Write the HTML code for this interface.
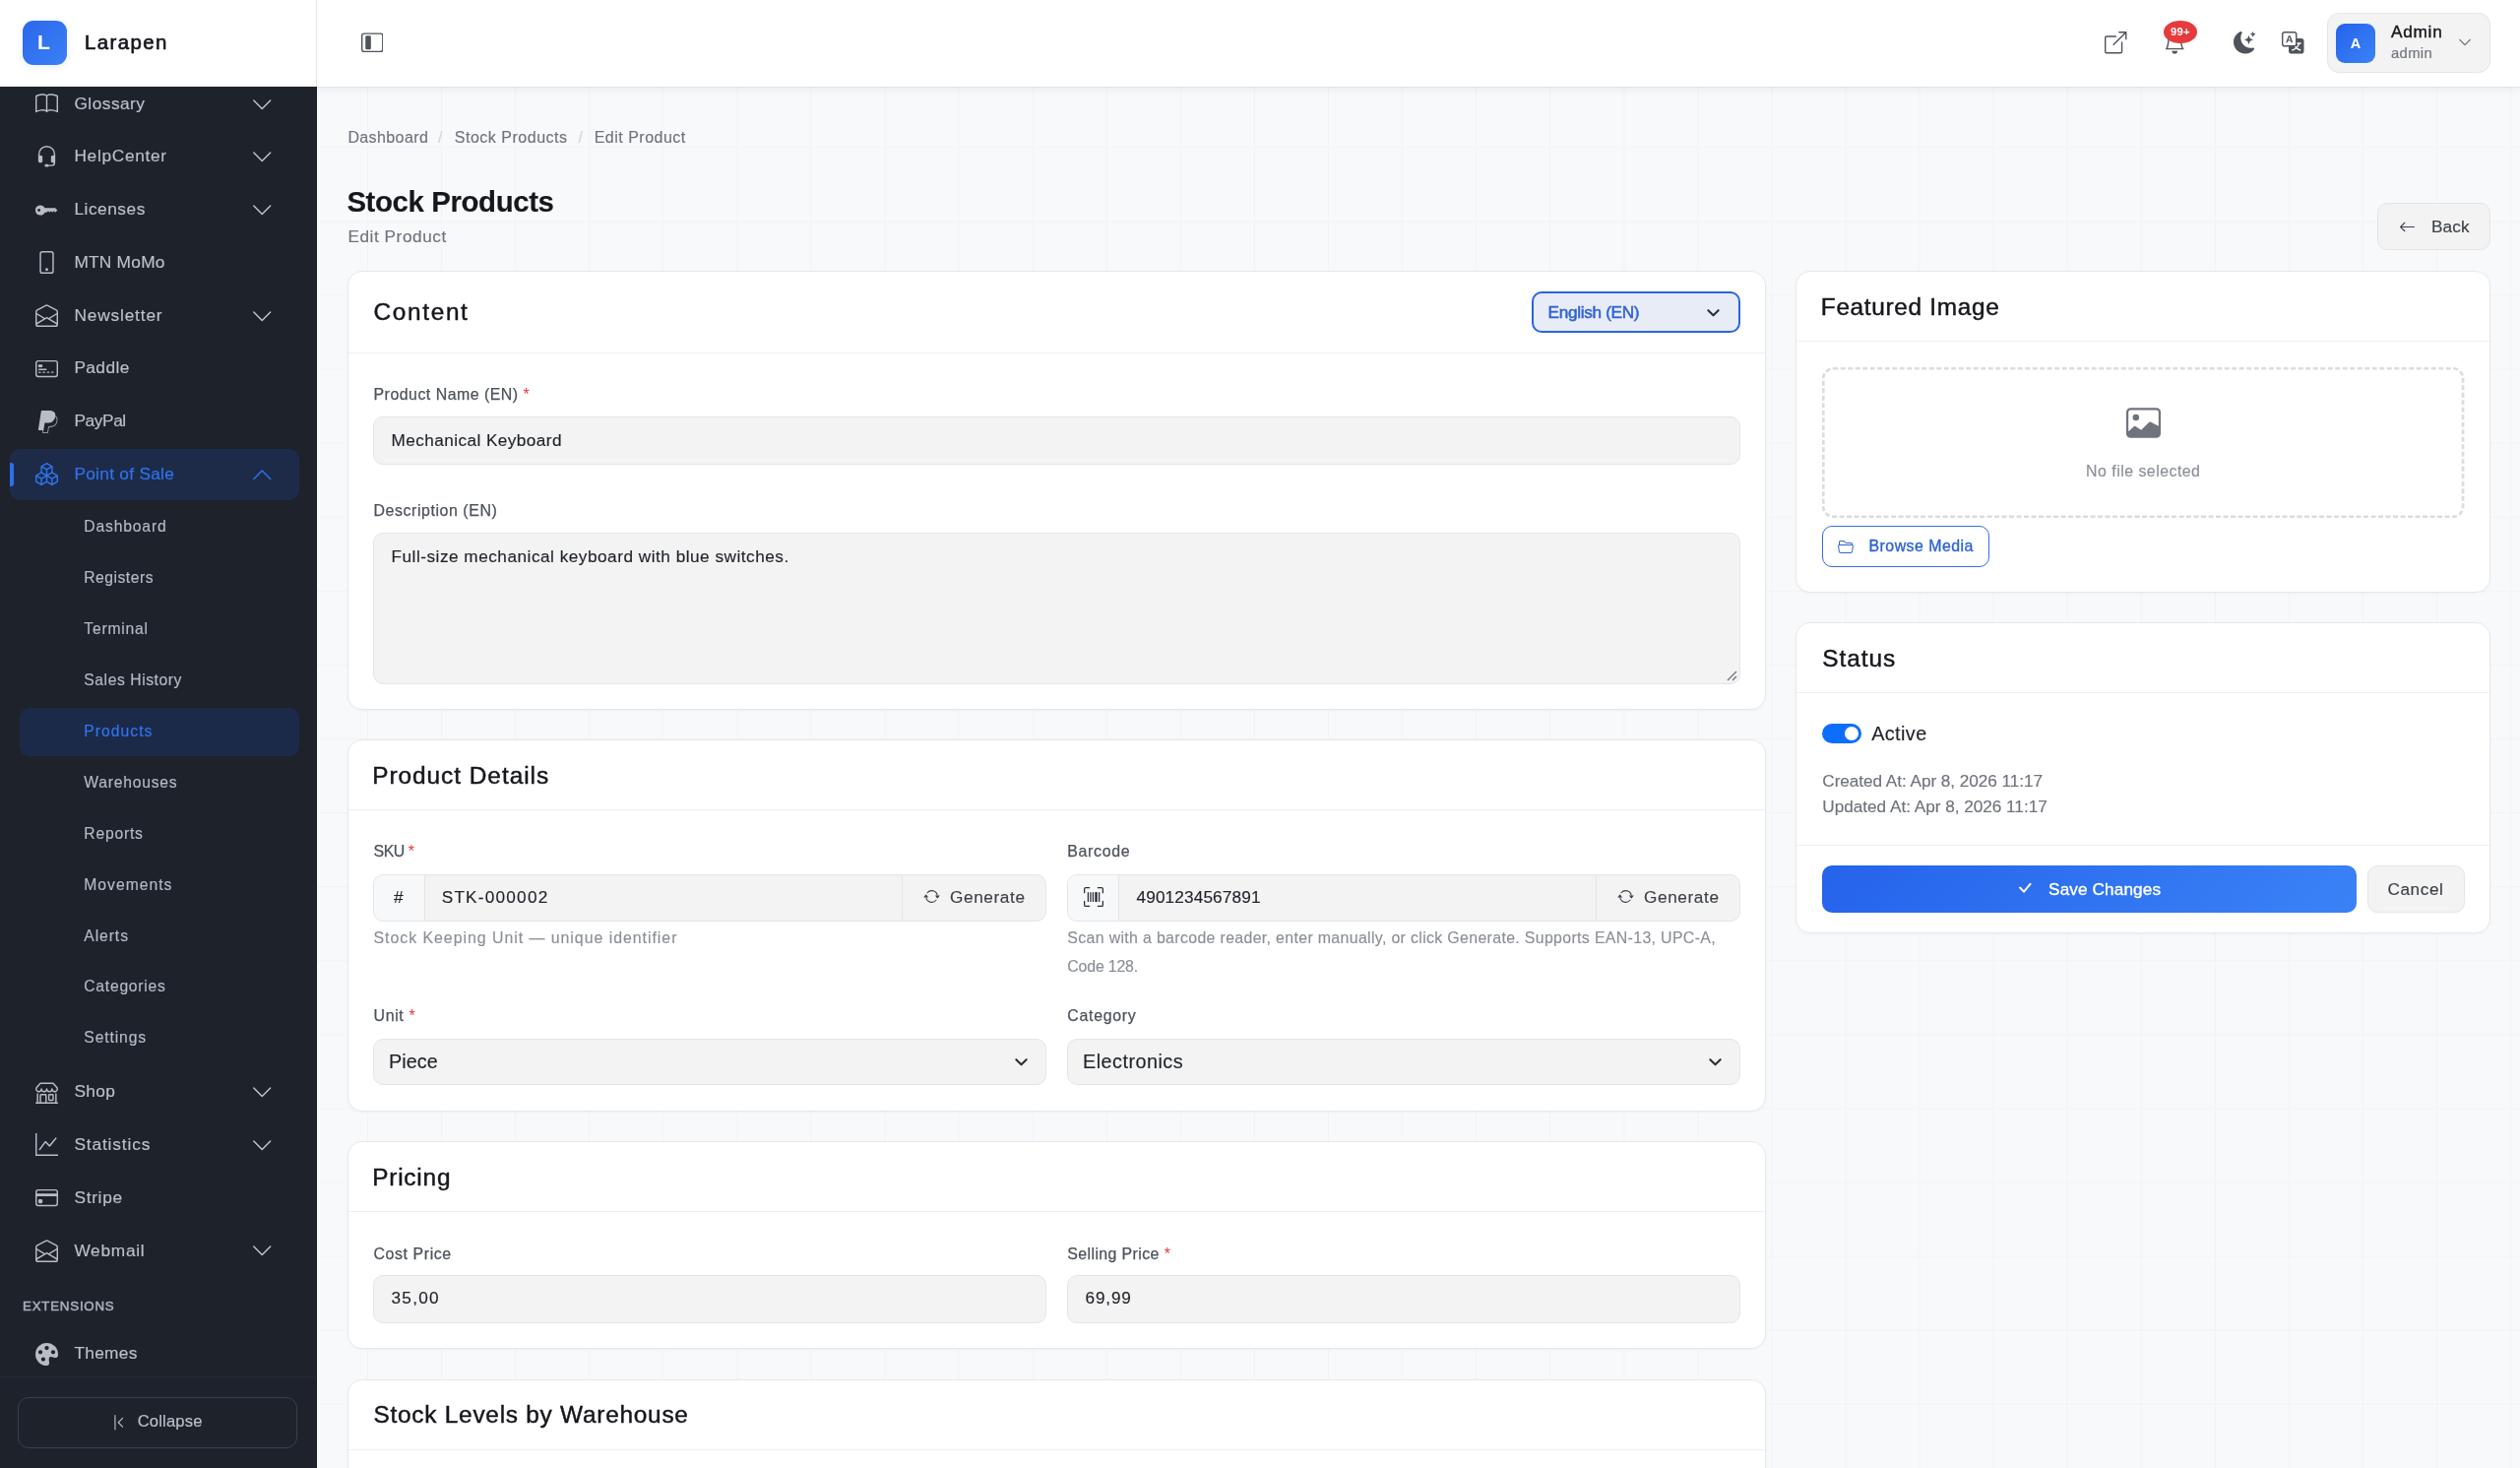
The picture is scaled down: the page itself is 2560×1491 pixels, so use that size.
<!DOCTYPE html>
<html lang="en">
<head>
<meta charset="utf-8">
<title>Edit Product - Stock Products - Larapen</title>
<style>
*{box-sizing:border-box;margin:0;padding:0}
html,body{width:2560px;height:1491px;overflow:hidden}
body{position:relative;font-family:"Liberation Sans",sans-serif;color:#15171c;background-color:#f8f9fb;
background-image:linear-gradient(to right,#f2f3f6 1.3px,transparent 1.3px),linear-gradient(to bottom,#f2f3f6 1.3px,transparent 1.3px);
background-size:75.08px 75.08px;background-position:-2.4px -0.8px}
.abs{position:absolute}
.t{position:absolute;white-space:nowrap;line-height:1;-webkit-text-stroke:.15px}
main,#sidebar,#topbar{will-change:transform}
svg{display:block}
/* ---------- sidebar ---------- */
#sidebar{z-index:3;position:absolute;left:0;top:0;width:321.5px;height:1491px;background:#1e222b;border-right:1px solid #1a1d26}
#brand{position:absolute;left:0;top:0;width:322px;height:88px;background:#fff;border-right:1px solid #e6e7ea}
#logo{position:absolute;left:22.5px;top:20.6px;width:45px;height:45px;border-radius:11px;background:linear-gradient(135deg,#2b67ec,#3b80f5);box-shadow:0 2px 9px rgba(37,99,235,.10)}
#logo span{position:absolute;left:0;top:-0.5px;width:44px;line-height:45px;text-align:center;color:#fff;font-weight:700;font-size:21px}
.nav{position:absolute;left:10px;width:294px;height:51.5px;border-radius:10px;color:#bcc0c9;font-size:17.3px}
.nav .ic{position:absolute;left:26px;top:14px;width:23px;height:23px;fill:#b9bcc3}
.nav .t{left:65.4px;top:16.65px}
.nav .ch{position:absolute;left:245px;top:14.5px;width:22.5px;height:22.5px;fill:#c3c6cc}
.nav.on{background:#1e2b48;color:#2f74f0}
.nav.on .ic,.nav.on .ch{fill:#2f74f0}
.nav.on i{position:absolute;left:0;top:14px;width:4px;height:24px;border-radius:0 3px 3px 0;background:#2f6fed}
.sub{position:absolute;left:20px;width:284px;height:49px;border-radius:10px;color:#b6bac4;font-size:15.7px}
.sub .t{left:65.3px;top:16.2px}
.sub.on{background:#1c2a49;color:#2f74f0}
#ext{left:23px;top:1320.4px;font-size:13.3px;font-weight:400;-webkit-text-stroke:.5px #adb1bb;color:#adb1bb}
#sbline{position:absolute;left:0;top:1398px;width:321px;height:1px;background:#242832}
#collapse{position:absolute;left:18px;top:1419px;width:284px;height:52px;border:1px solid #3a3f4a;border-radius:11px;color:#bcc0c9;font-size:16.6px}
#collapse svg{position:absolute;left:93px;top:15.5px;width:17.5px;height:17.5px;fill:#c3c6cc}
#collapse .t{left:120.7px;top:16.45px}
/* ---------- topbar ---------- */
#topbar{position:absolute;left:322px;top:0;width:2238px;height:88px;background:#fff;box-shadow:0 2px 10px rgba(20,24,36,.07),0 1px 0 rgba(20,24,36,.05)}
.hi{position:absolute;top:32px;width:22.5px;height:22.5px;fill:#50535c}
#badge{position:absolute;left:1876px;top:21px;width:34px;height:22.5px;border-radius:50%;background:#e53b3c;color:#fff;font-weight:700;font-size:11.2px;letter-spacing:.3px;text-align:center;line-height:23px}
#user{position:absolute;left:2042px;top:13px;width:166px;height:61px;border-radius:12px;background:#f3f3f4;border:1px solid #e6e6e9}
#avatar{position:absolute;left:8px;top:10px;width:40px;height:40px;border-radius:9px;background:linear-gradient(135deg,#2563eb,#3b82f6);color:#fff;font-weight:700;font-size:14.5px;text-align:center;line-height:40px}
/* ---------- content ---------- */
.crumb{font-size:16px;color:#6f737c;top:131px}
.sep{font-size:16px;color:#d3d5da;top:131px}
.card{position:absolute;background:#fff;border:1px solid #e7e8eb;border-radius:15px;box-shadow:0 1px 3px rgba(20,24,36,.04)}
.card .hd{position:absolute;left:0;right:0;top:0;border-bottom:1px solid #eeeff1}
.ct{font-size:24.4px;color:#15171c;font-weight:400;-webkit-text-stroke:.45px #15171c}
.lbl{font-size:15.9px;color:#4d525b;-webkit-text-stroke:.25px #4d525b}
.req{color:#e5383b;-webkit-text-stroke:0}
.inp{position:absolute;background:#f3f3f4;border:1px solid #e5e5e8;border-radius:10px;font-size:17.2px;color:#1f2329}
.help{font-size:15.9px;color:#8b8f97}
.btn{position:absolute;border-radius:10px;font-size:17.2px}
.btn.gray{background:#f3f3f4;border:1px solid #e5e5e8;color:#3c4049}
.ig{position:absolute;height:48px;background:#f3f3f4;border:1px solid #e5e5e8;border-radius:10px;overflow:hidden;font-size:17.2px;color:#1f2329}
.ig .pre{position:absolute;left:0;top:0;width:52px;height:46px;background:#f7f8fa;border-right:1px solid #e5e5e8}
.ig .gen{position:absolute;right:0;top:0;width:146px;height:46px;border-left:1px solid #e5e5e8;color:#3c4049}
.ig .gen svg{position:absolute;left:20.6px;top:13.2px;width:17px;height:17px;fill:#3c4049}
.ig .gen .t{left:48px;top:14px}
.sel{position:absolute;height:47px;background:#f3f3f4;border:1px solid #e5e5e8;border-radius:10px;font-size:19.8px;color:#1f2329}
.sel svg{position:absolute;right:17px;top:15px;width:15px;height:15px;fill:none;stroke:#2b2f36;stroke-width:2.2;stroke-linecap:round;stroke-linejoin:round}
</style>
</head>
<body>
<aside id="sidebar">
<nav>
<a class="nav" style="top:80.00px"><svg class="ic" viewBox="0 0 16 16"><path d="M1 2.828c.885-.37 2.154-.769 3.388-.893 1.33-.134 2.458.063 3.112.752v9.746c-.935-.53-2.12-.603-3.213-.493-1.18.12-2.37.461-3.287.811V2.828zm7.5-.141c.654-.689 1.782-.886 3.112-.752 1.234.124 2.503.523 3.388.893v9.923c-.918-.35-2.107-.692-3.287-.81-1.094-.111-2.278-.039-3.213.492V2.687zM8 1.783C7.015.936 5.587.81 4.287.94c-1.514.153-3.042.672-3.994 1.105A.5.5 0 0 0 0 2.5v11a.5.5 0 0 0 .707.455c.882-.4 2.303-.881 3.68-1.02 1.409-.142 2.59.087 3.223.877a.5.5 0 0 0 .78 0c.633-.79 1.814-1.019 3.222-.877 1.378.139 2.8.62 3.681 1.02A.5.5 0 0 0 16 13.5v-11a.5.5 0 0 0-.293-.455c-.952-.433-2.48-.952-3.994-1.105C10.413.809 8.985.936 8 1.783z"/></svg><span class="t" id="n1" style="letter-spacing:0.49px">Glossary</span><svg class="ch" viewBox="0 0 16 16"><path fill-rule="evenodd" d="M1.646 4.646a.5.5 0 0 1 .708 0L8 10.293l5.646-5.647a.5.5 0 0 1 .708.708l-6 6a.5.5 0 0 1-.708 0l-6-6a.5.5 0 0 1 0-.708z"/></svg></a>
<a class="nav" style="top:133.75px"><svg class="ic" viewBox="0 0 16 16"><path d="M8 1a5 5 0 0 0-5 5v1h1a1 1 0 0 1 1 1v3a1 1 0 0 1-1 1H3a1 1 0 0 1-1-1V6a6 6 0 1 1 12 0v6a2.5 2.5 0 0 1-2.5 2.5H9.366a1 1 0 0 1-.866.5h-1a1 1 0 1 1 0-2h1a1 1 0 0 1 .866.5H11.5A1.5 1.5 0 0 0 13 12h-1a1 1 0 0 1-1-1V8a1 1 0 0 1 1-1h1V6a5 5 0 0 0-5-5z"/></svg><span class="t" id="n2" style="letter-spacing:0.7px">HelpCenter</span><svg class="ch" viewBox="0 0 16 16"><path fill-rule="evenodd" d="M1.646 4.646a.5.5 0 0 1 .708 0L8 10.293l5.646-5.647a.5.5 0 0 1 .708.708l-6 6a.5.5 0 0 1-.708 0l-6-6a.5.5 0 0 1 0-.708z"/></svg></a>
<a class="nav" style="top:187.50px"><svg class="ic" viewBox="0 0 16 16"><path d="M3.5 11.5a3.5 3.5 0 1 1 3.163-5H14L15.5 8 14 9.5l-1-1-1 1-1-1-1 1-1-1-1 1H6.663a3.5 3.5 0 0 1-3.163 2zM2.5 9a1 1 0 1 0 0-2 1 1 0 0 0 0 2z"/></svg><span class="t" id="n3" style="letter-spacing:0.53px">Licenses</span><svg class="ch" viewBox="0 0 16 16"><path fill-rule="evenodd" d="M1.646 4.646a.5.5 0 0 1 .708 0L8 10.293l5.646-5.647a.5.5 0 0 1 .708.708l-6 6a.5.5 0 0 1-.708 0l-6-6a.5.5 0 0 1 0-.708z"/></svg></a>
<a class="nav" style="top:241.25px"><svg class="ic" viewBox="0 0 16 16"><path d="M11 1a1 1 0 0 1 1 1v12a1 1 0 0 1-1 1H5a1 1 0 0 1-1-1V2a1 1 0 0 1 1-1h6zM5 0a2 2 0 0 0-2 2v12a2 2 0 0 0 2 2h6a2 2 0 0 0 2-2V2a2 2 0 0 0-2-2H5z"/><path d="M8 14a1 1 0 1 0 0-2 1 1 0 0 0 0 2z"/></svg><span class="t" id="n4" style="letter-spacing:0.25px">MTN MoMo</span></a>
<a class="nav" style="top:295.00px"><svg class="ic" viewBox="0 0 16 16"><path d="M8.47 1.318a1 1 0 0 0-.94 0l-6 3.2A1 1 0 0 0 1 5.4v.817l5.75 3.45L8 8.917l1.25.75L15 6.217V5.4a1 1 0 0 0-.53-.882l-6-3.2ZM15 7.383l-4.778 2.867L15 13.117V7.383Zm-.035 6.88L8 10.082l-6.965 4.18A1 1 0 0 0 2 15h12a1 1 0 0 0 .965-.738ZM1 13.116l4.778-2.867L1 7.383v5.734ZM7.059.435a2 2 0 0 1 1.882 0l6 3.2A2 2 0 0 1 16 5.4V14a2 2 0 0 1-2 2H2a2 2 0 0 1-2-2V5.4a2 2 0 0 1 1.059-1.765l6-3.2Z"/></svg><span class="t" id="n5" style="letter-spacing:0.84px">Newsletter</span><svg class="ch" viewBox="0 0 16 16"><path fill-rule="evenodd" d="M1.646 4.646a.5.5 0 0 1 .708 0L8 10.293l5.646-5.647a.5.5 0 0 1 .708.708l-6 6a.5.5 0 0 1-.708 0l-6-6a.5.5 0 0 1 0-.708z"/></svg></a>
<a class="nav" style="top:348.75px"><svg class="ic" viewBox="0 0 16 16"><path d="M14 3a1 1 0 0 1 1 1v8a1 1 0 0 1-1 1H2a1 1 0 0 1-1-1V4a1 1 0 0 1 1-1h12zM2 2a2 2 0 0 0-2 2v8a2 2 0 0 0 2 2h12a2 2 0 0 0 2-2V4a2 2 0 0 0-2-2H2z"/><path d="M2 5.5a.5.5 0 0 1 .5-.5h2a.5.5 0 0 1 .5.5v1a.5.5 0 0 1-.5.5h-2a.5.5 0 0 1-.5-.5v-1zm0 3a.5.5 0 0 1 .5-.5h5a.5.5 0 0 1 0 1h-5a.5.5 0 0 1-.5-.5zm0 2a.5.5 0 0 1 .5-.5h1a.5.5 0 0 1 0 1h-1a.5.5 0 0 1-.5-.5zm3 0a.5.5 0 0 1 .5-.5h1a.5.5 0 0 1 0 1h-1a.5.5 0 0 1-.5-.5zm3 0a.5.5 0 0 1 .5-.5h1a.5.5 0 0 1 0 1h-1a.5.5 0 0 1-.5-.5zm3 0a.5.5 0 0 1 .5-.5h1a.5.5 0 0 1 0 1h-1a.5.5 0 0 1-.5-.5z"/></svg><span class="t" id="n6" style="letter-spacing:0.42px">Paddle</span></a>
<a class="nav" style="top:402.50px"><svg class="ic" viewBox="0 0 16 16"><path d="M14.06 3.713c.12-1.071-.093-1.832-.702-2.526C12.628.356 11.312 0 9.626 0H4.734a.7.7 0 0 0-.691.59L2.005 13.509a.42.42 0 0 0 .415.486h2.756l-.202 1.28a.628.628 0 0 0 .62.726H8.14c.429 0 .793-.31.862-.731l.025-.13.48-3.043.03-.164.001-.007a.351.351 0 0 1 .348-.297h.38c1.266 0 2.425-.256 3.345-.91.379-.27.712-.603.993-1.005a4.942 4.942 0 0 0 .88-2.195c.242-1.246.13-2.356-.57-3.154a2.687 2.687 0 0 0-.76-.59l-.094-.061ZM6.543 8.82a.695.695 0 0 1 .321-.079H8.3c2.82 0 5.027-1.144 5.672-4.456l.003-.016c.217.124.4.27.548.438.546.623.679 1.535.45 2.71-.272 1.397-.866 2.307-1.663 2.874-.802.57-1.842.815-3.043.815h-.38a.873.873 0 0 0-.863.734l-.03.164-.48 3.043-.024.13-.001.004a.352.352 0 0 1-.348.296H5.595a.106.106 0 0 1-.105-.123l.208-1.32.845-5.214Z"/></svg><span class="t" id="n7" style="letter-spacing:-0.39px">PayPal</span></a>
<a class="nav on" style="top:456.25px"><i></i><svg class="ic" viewBox="0 0 16 16"><path d="M7.752.066a.5.5 0 0 1 .496 0l3.75 2.143a.5.5 0 0 1 .252.434v3.995l3.498 2A.5.5 0 0 1 16 9.07v4.286a.5.5 0 0 1-.252.434l-3.75 2.143a.5.5 0 0 1-.496 0l-3.502-2-3.502 2.001a.5.5 0 0 1-.496 0l-3.75-2.143A.5.5 0 0 1 0 13.357V9.071a.5.5 0 0 1 .252-.434L3.75 6.638V2.643a.5.5 0 0 1 .252-.434L7.752.066ZM4.25 7.504 1.508 9.071l2.742 1.567 2.742-1.567L4.25 7.504ZM7.5 9.933l-2.75 1.571v3.134l2.75-1.571V9.933Zm1 3.134 2.75 1.571v-3.134L8.5 9.933v3.134Zm.508-3.996 2.742 1.567 2.742-1.567-2.742-1.567-2.742 1.567Zm2.242-2.433V3.504L8.5 5.076V8.21l2.75-1.572ZM7.5 8.21V5.076L4.75 3.504v3.134L7.5 8.21ZM5.258 2.643 8 4.21l2.742-1.567L8 1.076 5.258 2.643ZM15 9.933l-2.75 1.571v3.134L15 13.067V9.933ZM3.75 14.638v-3.134L1 9.933v3.134l2.75 1.571Z"/></svg><span class="t" id="n8" style="letter-spacing:0.29px">Point of Sale</span><svg class="ch" viewBox="0 0 16 16"><path fill-rule="evenodd" d="M7.646 4.646a.5.5 0 0 1 .708 0l6 6a.5.5 0 0 1-.708.708L8 5.707l-5.646 5.647a.5.5 0 0 1-.708-.708l6-6z"/></svg></a>
<a class="sub" style="top:510.90px"><span class="t" id="n9" style="letter-spacing:0.83px">Dashboard</span></a>
<a class="sub" style="top:562.83px"><span class="t" id="n10" style="letter-spacing:0.49px">Registers</span></a>
<a class="sub" style="top:614.76px"><span class="t" id="n11" style="letter-spacing:0.77px">Terminal</span></a>
<a class="sub" style="top:666.69px"><span class="t" id="n12" style="letter-spacing:0.56px">Sales History</span></a>
<a class="sub on" style="top:718.62px"><span class="t" id="n13" style="letter-spacing:1.03px">Products</span></a>
<a class="sub" style="top:770.55px"><span class="t" id="n14" style="letter-spacing:0.76px">Warehouses</span></a>
<a class="sub" style="top:822.48px"><span class="t" id="n15" style="letter-spacing:0.78px">Reports</span></a>
<a class="sub" style="top:874.41px"><span class="t" id="n16" style="letter-spacing:1.01px">Movements</span></a>
<a class="sub" style="top:926.34px"><span class="t" id="n17" style="letter-spacing:0.92px">Alerts</span></a>
<a class="sub" style="top:978.27px"><span class="t" id="n18" style="letter-spacing:0.74px">Categories</span></a>
<a class="sub" style="top:1030.20px"><span class="t" id="n19" style="letter-spacing:0.87px">Settings</span></a>
<a class="nav" style="top:1083.70px"><svg class="ic" viewBox="0 0 16 16"><path d="M2.97 1.35A1 1 0 0 1 3.73 1h8.54a1 1 0 0 1 .76.35l2.609 3.044A1.5 1.5 0 0 1 16 5.37v.255a2.375 2.375 0 0 1-4.25 1.458A2.371 2.371 0 0 1 9.875 8 2.37 2.37 0 0 1 8 7.083 2.37 2.37 0 0 1 6.125 8a2.37 2.37 0 0 1-1.875-.917A2.375 2.375 0 0 1 0 5.625V5.37a1.5 1.5 0 0 1 .361-.976l2.61-3.045zm1.78 4.275a1.375 1.375 0 0 0 2.75 0 .5.5 0 0 1 1 0 1.375 1.375 0 0 0 2.75 0 .5.5 0 0 1 1 0 1.375 1.375 0 1 0 2.75 0V5.37a.5.5 0 0 0-.12-.325L12.27 2H3.73L1.12 5.045A.5.5 0 0 0 1 5.37v.255a1.375 1.375 0 0 0 2.75 0 .5.5 0 0 1 1 0zM1.5 8.5A.5.5 0 0 1 2 9v6h1v-5a1 1 0 0 1 1-1h3a1 1 0 0 1 1 1v5h6V9a.5.5 0 0 1 1 0v6h.5a.5.5 0 0 1 0 1H.5a.5.5 0 0 1 0-1H1V9a.5.5 0 0 1 .5-.5zM4 15h3v-5H4v5zm5-5a1 1 0 0 1 1-1h2a1 1 0 0 1 1 1v3a1 1 0 0 1-1 1h-2a1 1 0 0 1-1-1v-3zm3 0h-2v3h2v-3z"/></svg><span class="t" id="n20" style="letter-spacing:0.38px">Shop</span><svg class="ch" viewBox="0 0 16 16"><path fill-rule="evenodd" d="M1.646 4.646a.5.5 0 0 1 .708 0L8 10.293l5.646-5.647a.5.5 0 0 1 .708.708l-6 6a.5.5 0 0 1-.708 0l-6-6a.5.5 0 0 1 0-.708z"/></svg></a>
<a class="nav" style="top:1137.45px"><svg class="ic" viewBox="0 0 16 16"><path fill-rule="evenodd" d="M0 0h1v15h15v1H0V0Zm14.817 3.113a.5.5 0 0 1 .07.704l-4.5 5.5a.5.5 0 0 1-.74.037L7.06 6.767l-3.656 5.027a.5.5 0 0 1-.808-.588l4-5.5a.5.5 0 0 1 .758-.06l2.609 2.61 4.15-5.073a.5.5 0 0 1 .704-.07Z"/></svg><span class="t" id="n21" style="letter-spacing:0.86px">Statistics</span><svg class="ch" viewBox="0 0 16 16"><path fill-rule="evenodd" d="M1.646 4.646a.5.5 0 0 1 .708 0L8 10.293l5.646-5.647a.5.5 0 0 1 .708.708l-6 6a.5.5 0 0 1-.708 0l-6-6a.5.5 0 0 1 0-.708z"/></svg></a>
<a class="nav" style="top:1191.20px"><svg class="ic" viewBox="0 0 16 16"><path d="M0 4a2 2 0 0 1 2-2h12a2 2 0 0 1 2 2v8a2 2 0 0 1-2 2H2a2 2 0 0 1-2-2V4zm2-1a1 1 0 0 0-1 1v1h14V4a1 1 0 0 0-1-1H2zm13 4H1v5a1 1 0 0 0 1 1h12a1 1 0 0 0 1-1V7z"/><path d="M2 10a1 1 0 0 1 1-1h1a1 1 0 0 1 1 1v1a1 1 0 0 1-1 1H3a1 1 0 0 1-1-1v-1z"/></svg><span class="t" id="n22" style="letter-spacing:0.71px">Stripe</span></a>
<a class="nav" style="top:1244.95px"><svg class="ic" viewBox="0 0 16 16"><path d="M8.47 1.318a1 1 0 0 0-.94 0l-6 3.2A1 1 0 0 0 1 5.4v.817l5.75 3.45L8 8.917l1.25.75L15 6.217V5.4a1 1 0 0 0-.53-.882l-6-3.2ZM15 7.383l-4.778 2.867L15 13.117V7.383Zm-.035 6.88L8 10.082l-6.965 4.18A1 1 0 0 0 2 15h12a1 1 0 0 0 .965-.738ZM1 13.116l4.778-2.867L1 7.383v5.734ZM7.059.435a2 2 0 0 1 1.882 0l6 3.2A2 2 0 0 1 16 5.4V14a2 2 0 0 1-2 2H2a2 2 0 0 1-2-2V5.4a2 2 0 0 1 1.059-1.765l6-3.2Z"/></svg><span class="t" id="n23" style="letter-spacing:0.73px">Webmail</span><svg class="ch" viewBox="0 0 16 16"><path fill-rule="evenodd" d="M1.646 4.646a.5.5 0 0 1 .708 0L8 10.293l5.646-5.647a.5.5 0 0 1 .708.708l-6 6a.5.5 0 0 1-.708 0l-6-6a.5.5 0 0 1 0-.708z"/></svg></a>
<span class="t" id="ext" style="letter-spacing:0.78px">EXTENSIONS</span>
<a class="nav" style="top:1349.80px"><svg class="ic" viewBox="0 0 16 16"><path d="M12.433 10.07C14.133 10.585 16 11.15 16 8a8 8 0 1 0-8 8c1.996 0 1.826-1.504 1.649-3.08-.124-1.101-.252-2.237.351-2.92.465-.527 1.42-.237 2.433.07zM8 5a1.5 1.5 0 1 1 0-3 1.5 1.5 0 0 1 0 3zm4.5 3a1.5 1.5 0 1 1 0-3 1.5 1.5 0 0 1 0 3zM5 6.5a1.5 1.5 0 1 1-3 0 1.5 1.5 0 0 1 3 0zm.5 6.5a1.5 1.5 0 1 1 0-3 1.5 1.5 0 0 1 0 3z"/></svg><span class="t" id="n24" style="letter-spacing:0.31px">Themes</span></a>
</nav>
<div id="sbline"></div>
<div id="collapse"><svg viewBox="0 0 16 16"><path fill-rule="evenodd" d="M11.854 3.646a.5.5 0 0 1 0 .708L8.207 8l3.647 3.646a.5.5 0 0 1-.708.708l-4-4a.5.5 0 0 1 0-.708l4-4a.5.5 0 0 1 .708 0zM4.5 1a.5.5 0 0 0-.5.5v13a.5.5 0 0 0 1 0v-13a.5.5 0 0 0-.5-.5z"/></svg><span class="t" id="colt" style="letter-spacing:0.16px">Collapse</span></div>
<div id="brand"><div id="logo"><span>L</span></div><span class="t" id="brandt" style="letter-spacing:1.43px;left:86px;top:33px;font-size:20.4px;font-weight:400;-webkit-text-stroke:.65px #15171c;color:#15171c">Larapen</span></div>
</aside>
<header id="topbar">
<svg class="hi" style="left:44.5px;top:32px" viewBox="0 0 16 16"><path d="M14 2a1 1 0 0 1 1 1v10a1 1 0 0 1-1 1H2a1 1 0 0 1-1-1V3a1 1 0 0 1 1-1h12zM2 1a2 2 0 0 0-2 2v10a2 2 0 0 0 2 2h12a2 2 0 0 0 2-2V3a2 2 0 0 0-2-2H2z"/><path d="M3 4a1 1 0 0 1 1-1h2a1 1 0 0 1 1 1v8a1 1 0 0 1-1 1H4a1 1 0 0 1-1-1V4z"/></svg>
<svg class="hi" style="left:1816px" viewBox="0 0 16 16"><path fill-rule="evenodd" d="M8.636 3.5a.5.5 0 0 0-.5-.5H1.5A1.5 1.5 0 0 0 0 4.5v10A1.5 1.5 0 0 0 1.5 16h10a1.5 1.5 0 0 0 1.5-1.5V7.864a.5.5 0 0 0-1 0V14.5a.5.5 0 0 1-.5.5h-10a.5.5 0 0 1-.5-.5v-10a.5.5 0 0 1 .5-.5h6.636a.5.5 0 0 0 .5-.5z"/><path fill-rule="evenodd" d="M16 .5a.5.5 0 0 0-.5-.5h-5a.5.5 0 0 0 0 1h3.793L6.146 9.146a.5.5 0 1 0 .708.708L15 1.707V5.500a.5.5 0 0 0 1 0v-5z"/></svg>
<svg class="hi" style="left:1875.7px" viewBox="0 0 16 16"><path d="M8 16a2 2 0 0 0 2-2H6a2 2 0 0 0 2 2zM8 1.918l-.797.161A4.002 4.002 0 0 0 4 6c0 .628-.134 2.197-.459 3.742-.16.767-.376 1.566-.663 2.258h10.244c-.287-.692-.502-1.49-.663-2.258C12.134 8.197 12 6.628 12 6a4.002 4.002 0 0 0-3.203-3.920L8 1.917zM14.22 12c.223.447.481.801.78 1H1c.299-.199.557-.553.78-1C2.68 10.2 3 6.88 3 6c0-2.42 1.72-4.44 4.005-4.901a1 1 0 1 1 1.99 0A5.002 5.002 0 0 1 13 6c0 .88.32 4.2 1.22 6z"/></svg>
<span id="badge">99+</span>
<svg class="hi" style="left:1947px" viewBox="0 0 16 16"><path d="M6 .278a.768.768 0 0 1 .08.858 7.208 7.208 0 0 0-.878 3.46c0 4.021 3.278 7.277 7.318 7.277.527 0 1.04-.055 1.533-.16a.787.787 0 0 1 .81.316.733.733 0 0 1-.031.893A8.349 8.349 0 0 1 8.344 16C3.734 16 0 12.286 0 7.71 0 4.266 2.114 1.312 5.124.06A.752.752 0 0 1 6 .278z"/><path d="M10.794 3.148a.217.217 0 0 1 .412 0l.387 1.162c.173.518.579.924 1.097 1.097l1.162.387a.217.217 0 0 1 0 .412l-1.162.387a1.734 1.734 0 0 0-1.097 1.097l-.387 1.162a.217.217 0 0 1-.412 0l-.387-1.162A1.734 1.734 0 0 0 9.31 6.593l-1.162-.387a.217.217 0 0 1 0-.412l1.162-.387a1.734 1.734 0 0 0 1.097-1.097l.387-1.162zM13.863.099a.145.145 0 0 1 .274 0l.258.774c.115.346.386.617.732.732l.774.258a.145.145 0 0 1 0 .274l-.774.258a1.156 1.156 0 0 0-.732.732l-.258.774a.145.145 0 0 1-.274 0l-.258-.774a1.156 1.156 0 0 0-.732-.732l-.774-.258a.145.145 0 0 1 0-.274l.774-.258c.346-.115.617-.386.732-.732L13.863.1z"/></svg>
<svg class="hi" style="left:1996px" viewBox="0 0 16 16"><path d="M4.545 6.714 4.11 8H3l1.862-5h1.284L8 8H6.833l-.435-1.286H4.545zm1.634-.736L5.5 3.956h-.049l-.679 2.022H6.18z"/><path d="M0 2a2 2 0 0 1 2-2h7a2 2 0 0 1 2 2v3h3a2 2 0 0 1 2 2v7a2 2 0 0 1-2 2H7a2 2 0 0 1-2-2v-3H2a2 2 0 0 1-2-2V2zm2-1a1 1 0 0 0-1 1v7a1 1 0 0 0 1 1h7a1 1 0 0 0 1-1V2a1 1 0 0 0-1-1H2zm7.138 9.995c.193.301.402.583.63.846-.748.575-1.673 1.001-2.768 1.292.178.217.451.635.555.867 1.125-.359 2.08-.844 2.886-1.494.777.665 1.739 1.165 2.93 1.472.133-.254.414-.673.629-.89-1.125-.253-2.057-.694-2.82-1.284.681-.747 1.222-1.651 1.621-2.757H14V8h-3v1.047h.765c-.318.844-.74 1.546-1.272 2.130a6.066 6.066 0 0 1-.415-.492 1.988 1.988 0 0 1-.94.31z"/></svg>
<div id="user"><div id="avatar">A</div><span class="t" id="uname" style="letter-spacing:0.75px;left:64px;top:9.5px;font-size:17.2px;color:#15171c;-webkit-text-stroke:.4px #15171c">Admin</span><span class="t" id="urole" style="letter-spacing:0.35px;left:64px;top:33.3px;font-size:14.8px;color:#6f737c">admin</span><svg class="abs" style="left:132px;top:22px;width:14px;height:14px;fill:none;stroke:#6f737c;stroke-width:1.6;stroke-linecap:round;stroke-linejoin:round" viewBox="0 0 16 16"><path d="M2 5l6 6 6-6"/></svg></div>
</header>
<main>
<nav aria-label="breadcrumb">
<span class="t" id="bc1" style="letter-spacing:0.39px;left:353.4px;top:131.5px;font-size:16px;color:#6f737c">Dashboard</span>
<span class="t" id="bs1" style="left:445.0px;top:131.5px;font-size:16px;color:#d3d5da">/</span>
<span class="t" id="bc2" style="letter-spacing:0.51px;left:461.8px;top:131.5px;font-size:16px;color:#6f737c">Stock Products</span>
<span class="t" id="bs2" style="left:587.6px;top:131.5px;font-size:16px;color:#d3d5da">/</span>
<span class="t" id="bc3" style="letter-spacing:0.49px;left:603.7px;top:131.5px;font-size:16px;color:#6f737c">Edit Product</span>
</nav>
<h1 class="t" id="h1" style="letter-spacing:-0.39px;left:352.4px;top:190.2px;font-size:29.4px;font-weight:700;color:#15171c">Stock Products</h1>
<span class="t" id="h1s" style="letter-spacing:0.56px;left:353.4px;top:232.2px;font-size:17.2px;color:#6f737c">Edit Product</span>
<a class="btn gray" style="left:2415px;top:206px;width:115px;height:48px"><svg class="abs" style="left:21px;top:15px;width:17px;height:17px;fill:#3c4049" viewBox="0 0 16 16"><path fill-rule="evenodd" d="M15 8a.5.5 0 0 0-.5-.5H2.707l3.147-3.146a.5.5 0 1 0-.708-.708l-4 4a.5.5 0 0 0 0 .708l4 4a.5.5 0 0 0 .708-.708L2.707 8.500H14.500A.5.5 0 0 0 15 8z"/></svg><span class="t" id="backt" style="letter-spacing:0.16px;left:54.0px;top:15.4px;font-size:17.2px;">Back</span></a>
<section class="card" style="left:353px;top:275px;width:1441px;height:446px">
<div class="hd" style="height:83.3px"></div>
<h2 class="t ct" id="c1" style="letter-spacing:1.64px;left:25.6px;top:29.4px;font-size:24.4px;">Content</h2>
<div class="abs" style="left:1201.6px;top:20px;width:212.5px;height:42px;border:2px solid #2c63df;border-radius:10px;background:#e8ecf6"><span class="t" id="lang" style="letter-spacing:-0.32px;left:15.0px;top:10.8px;font-size:17.2px;color:#2f63d6;-webkit-text-stroke:.5px #2f63d6">English (EN)</span><svg class="abs" style="right:18px;top:12px;width:15px;height:15px;fill:none;stroke:#2b2f36;stroke-width:2.2;stroke-linecap:round;stroke-linejoin:round" viewBox="0 0 16 16"><path d="M2.500 5.500l5.500 5.500 5.500-5.500"/></svg></div>
<span class="t lbl" id="l1" style="letter-spacing:0.5px;left:25.5px;top:117.2px;font-size:15.9px;">Product Name (EN)<span class="req"> *</span></span>
<div class="inp" style="left:25px;top:147.2px;width:1389px;height:48.8px"><span class="t" id="v1" style="letter-spacing:0.43px;left:17.5px;top:14.4px;font-size:17.2px;">Mechanical Keyboard</span></div>
<span class="t lbl" id="l2" style="letter-spacing:0.58px;left:25.5px;top:234.9px;font-size:15.9px;">Description (EN)</span>
<div class="inp" style="left:25px;top:265.0px;width:1389px;height:153.8px"><span class="t" id="v2" style="letter-spacing:0.51px;left:17.5px;top:14.5px;font-size:17.2px;">Full-size mechanical keyboard with blue switches.</span><svg class="abs" style="right:2px;bottom:2px;width:11px;height:11px;stroke:#6b6f78;stroke-width:1.3;fill:none" viewBox="0 0 11 11"><path d="M10 1L1 10M10 6L6 10"/></svg></div>
</section>
<section class="card" style="left:353px;top:751px;width:1441px;height:378px">
<div class="hd" style="height:71.1px"></div>
<h2 class="t ct" id="c2" style="letter-spacing:0.97px;left:24.2px;top:24.3px;font-size:24.4px;">Product Details</h2>
<span class="t lbl" id="l3" style="letter-spacing:-0.45px;left:25.5px;top:104.5px;font-size:15.9px;">SKU<span class="req"> *</span></span>
<span class="t lbl" id="l4" style="letter-spacing:0.69px;left:730.3px;top:104.5px;font-size:15.9px;">Barcode</span>
<div class="ig" style="left:25px;top:135.5px;width:684px"><div class="pre"><span class="t" id="hash" style="left:20.0px;top:14.9px;font-size:17.2px;">#</span></div><span class="t" id="v3" style="letter-spacing:1.23px;left:68.7px;top:14.4px;font-size:17.2px;">STK-000002</span><div class="gen"><svg viewBox="0 0 16 16"><path d="M11.534 7h3.932a.25.25 0 0 1 .192.41l-1.966 2.36a.25.25 0 0 1-.384 0l-1.966-2.36a.25.25 0 0 1 .192-.41zm-11 2h3.932a.25.25 0 0 0 .192-.41L2.692 6.23a.25.25 0 0 0-.384 0L.342 8.59A.25.25 0 0 0 .534 9z"/><path fill-rule="evenodd" d="M8 3c-1.552 0-2.94.707-3.857 1.818a.5.5 0 1 1-.771-.636A6.002 6.002 0 0 1 13.917 7H12.9A5.002 5.002 0 0 0 8 3zM3.100 9a5.002 5.002 0 0 0 8.757 2.182.5.5 0 1 1 .771.636A6.002 6.002 0 0 1 2.083 9H3.100z"/></svg><span class="t" id="g1" style="letter-spacing:0.62px;left:48.0px;top:14.4px;font-size:17.2px;">Generate</span></div></div>
<div class="ig" style="left:730px;top:135.5px;width:684px"><div class="pre"><svg class="abs" style="left:15.5px;top:12.6px;width:20px;height:20px;fill:#2b2f36" viewBox="0 0 16 16"><path d="M1.500 1a.5.5 0 0 0-.5.5v3a.5.5 0 0 1-1 0v-3A1.500 1.500 0 0 1 1.500 0h3a.5.5 0 0 1 0 1h-3zM11 .5a.5.5 0 0 1 .5-.5h3A1.500 1.500 0 0 1 16 1.500v3a.5.5 0 0 1-1 0v-3a.5.5 0 0 0-.5-.5h-3a.5.5 0 0 1-.5-.5zM.5 11a.5.5 0 0 1 .5.5v3a.5.5 0 0 0 .5.5h3a.5.5 0 0 1 0 1h-3A1.500 1.500 0 0 1 0 14.500v-3a.5.5 0 0 1 .5-.5zm15 0a.5.5 0 0 1 .5.5v3a1.500 1.500 0 0 1-1.500 1.500h-3a.5.5 0 0 1 0-1h3a.5.5 0 0 0 .5-.5v-3a.5.5 0 0 1 .5-.5zM3 4.500a.5.5 0 0 1 1 0v7a.5.5 0 0 1-1 0v-7zm2 0a.5.5 0 0 1 1 0v7a.5.5 0 0 1-1 0v-7zm2 0a.5.5 0 0 1 1 0v7a.5.5 0 0 1-1 0v-7zm2 0a.5.5 0 0 1 .5-.5h1a.5.5 0 0 1 .5.5v7a.5.5 0 0 1-.5.5h-1a.5.5 0 0 1-.5-.5v-7zm3 0a.5.5 0 0 1 1 0v7a.5.5 0 0 1-1 0v-7z"/></svg></div><span class="t" id="v4" style="letter-spacing:0.14px;left:69.5px;top:14.4px;font-size:17.2px;">4901234567891</span><div class="gen"><svg viewBox="0 0 16 16"><path d="M11.534 7h3.932a.25.25 0 0 1 .192.41l-1.966 2.36a.25.25 0 0 1-.384 0l-1.966-2.36a.25.25 0 0 1 .192-.41zm-11 2h3.932a.25.25 0 0 0 .192-.41L2.692 6.23a.25.25 0 0 0-.384 0L.342 8.59A.25.25 0 0 0 .534 9z"/><path fill-rule="evenodd" d="M8 3c-1.552 0-2.94.707-3.857 1.818a.5.5 0 1 1-.771-.636A6.002 6.002 0 0 1 13.917 7H12.9A5.002 5.002 0 0 0 8 3zM3.100 9a5.002 5.002 0 0 0 8.757 2.182.5.5 0 1 1 .771.636A6.002 6.002 0 0 1 2.083 9H3.100z"/></svg><span class="t" id="g2" style="letter-spacing:0.62px;left:48.0px;top:14.4px;font-size:17.2px;">Generate</span></div></div>
<span class="t help" id="hp1" style="letter-spacing:0.97px;left:25.5px;top:192.7px;font-size:15.9px;">Stock Keeping Unit — unique identifier</span>
<span class="t help" id="hp2" style="letter-spacing:0.34px;left:730.3px;top:192.7px;font-size:15.9px;">Scan with a barcode reader, enter manually, or click Generate. Supports EAN-13, UPC-A,</span>
<span class="t help" id="hp3" style="letter-spacing:-0.19px;left:730.3px;top:222.4px;font-size:15.9px;">Code 128.</span>
<span class="t lbl" id="l5" style="letter-spacing:0.67px;left:25.5px;top:272.3px;font-size:15.9px;">Unit<span class="req"> *</span></span>
<span class="t lbl" id="l6" style="letter-spacing:0.7px;left:730.3px;top:272.3px;font-size:15.9px;">Category</span>
<div class="sel" style="left:25px;top:303.3px;width:684px"><span class="t" id="s1" style="letter-spacing:0.08px;left:15.0px;top:13.2px;font-size:19.8px;">Piece</span><svg viewBox="0 0 16 16"><path d="M2.5 5.5l5.5 5.5 5.5-5.5"/></svg></div>
<div class="sel" style="left:730px;top:303.3px;width:684px"><span class="t" id="s2" style="letter-spacing:0.48px;left:15.0px;top:13.2px;font-size:19.8px;">Electronics</span><svg viewBox="0 0 16 16"><path d="M2.5 5.5l5.5 5.5 5.5-5.5"/></svg></div>
</section>
<section class="card" style="left:353px;top:1159px;width:1441px;height:211px">
<div class="hd" style="height:71.1px"></div>
<h2 class="t ct" id="c3" style="letter-spacing:0.79px;left:24.2px;top:23.7px;font-size:24.4px;">Pricing</h2>
<span class="t lbl" id="l7" style="letter-spacing:0.6px;left:25.5px;top:105.7px;font-size:15.9px;">Cost Price</span>
<span class="t lbl" id="l8" style="letter-spacing:0.4px;left:730.3px;top:105.7px;font-size:15.9px;">Selling Price<span class="req"> *</span></span>
<div class="inp" style="left:25px;top:135.1px;width:684px;height:48.8px"><span class="t" id="v5" style="letter-spacing:1.27px;left:17.5px;top:14.4px;font-size:17.2px;">35,00</span></div>
<div class="inp" style="left:730px;top:135.1px;width:684px;height:48.8px"><span class="t" id="v6" style="letter-spacing:0.85px;left:17.5px;top:14.4px;font-size:17.2px;">69,99</span></div>
</section>
<section class="card" style="left:353px;top:1401px;width:1441px;height:200px">
<div class="hd" style="height:71.1px"></div>
<h2 class="t ct" id="c4" style="letter-spacing:0.75px;left:25.5px;top:23.2px;font-size:24.4px;">Stock Levels by Warehouse</h2>
</section>
<section class="card" style="left:1824px;top:275px;width:706px;height:327px">
<div class="hd" style="height:71.1px"></div>
<h2 class="t ct" id="c5" style="letter-spacing:0.68px;left:24.8px;top:23.6px;font-size:24.4px;">Featured Image</h2>
<div class="abs" style="left:26.3px;top:96.5px;width:652.3px;height:153px"><svg class="abs" style="left:0;top:0;width:652.3px;height:153px" viewBox="0 0 652.3 153"><rect x="1.25" y="1.25" width="649.8" height="150.5" rx="10" ry="10" fill="none" stroke="#dcdce0" stroke-width="2.7" stroke-dasharray="5 2.5"/></svg><svg class="abs" style="left:308.5px;top:39.5px;width:35px;height:35px;fill:#6f737c" viewBox="0 0 16 16"><path d="M6.002 5.500a1.500 1.500 0 1 1-3 0 1.500 1.500 0 0 1 3 0z"/><path d="M2.002 1a2 2 0 0 0-2 2v10a2 2 0 0 0 2 2h12a2 2 0 0 0 2-2V3a2 2 0 0 0-2-2h-12zm12 1a1 1 0 0 1 1 1v6.500l-3.777-1.947a.5.5 0 0 0-.577.093l-3.710 3.710-2.660-1.772a.5.5 0 0 0-.63.062L1.002 12V3a1 1 0 0 1 1-1h12z"/></svg><span class="t" id="nofile" style="letter-spacing:0.48px;left:267.8px;top:98.7px;font-size:15.9px;color:#8b8f97">No file selected</span></div>
<a class="btn" style="left:25.7px;top:258.4px;width:170.4px;height:41.2px;border:1.5px solid #3a6de0;color:#2f63d6;background:#fff"><svg class="abs" style="left:15px;top:11.3px;width:16px;height:16px;fill:#2f63d6" viewBox="0 0 16 16"><path d="M1 3.500A1.500 1.500 0 0 1 2.500 2h2.764c.958 0 1.760.56 2.311 1.184C7.985 3.648 8.480 4 9 4h4.500A1.500 1.500 0 0 1 15 5.500v.64c.57.265.94.876.856 1.546l-.64 5.124A2.500 2.500 0 0 1 12.733 15H3.266a2.500 2.500 0 0 1-2.481-2.190l-.64-5.124A1.500 1.500 0 0 1 1 6.140V3.500zM2 6h12v-.5a.5.5 0 0 0-.5-.5H9c-.964 0-1.710-.629-2.174-1.154C6.374 3.334 5.820 3 5.264 3H2.500a.5.5 0 0 0-.5.5V6zm-.367 1a.5.5 0 0 0-.496.562l.64 5.124A1.500 1.500 0 0 0 3.266 14h9.468a1.500 1.500 0 0 0 1.489-1.314l.64-5.124A.5.5 0 0 0 14.367 7H1.633z"/></svg><span class="t" id="browse" style="letter-spacing:0.48px;left:46.8px;top:11.5px;font-size:15.9px;-webkit-text-stroke:.35px #2f63d6">Browse Media</span></a>
</section>
<section class="card" style="left:1824px;top:632px;width:706px;height:316px">
<div class="hd" style="height:71.1px"></div>
<h2 class="t ct" id="c6" style="letter-spacing:0.97px;left:26.3px;top:23.6px;font-size:24.4px;">Status</h2>
<div class="abs" style="left:25.7px;top:101.9px;width:40px;height:20px;border-radius:10px;background:#0d6efd"><div class="abs" style="right:3.2px;top:3.25px;width:13.5px;height:13.5px;border-radius:7px;background:#fff"></div></div>
<span class="t" id="active" style="letter-spacing:0.42px;left:76.2px;top:102.8px;font-size:19.8px;color:#1f2329">Active</span>
<span class="t" id="cr" style="letter-spacing:-0.05px;left:26.3px;top:151.8px;font-size:17.2px;color:#6f737c">Created At: Apr 8, 2026 11:17</span>
<span class="t" id="up" style="letter-spacing:-0.02px;left:26.3px;top:178.1px;font-size:17.2px;color:#6f737c">Updated At: Apr 8, 2026 11:17</span>
<div class="abs" style="left:0;right:0;top:225.3px;height:1px;background:#eeeff1"></div>
<a class="btn" style="left:25.7px;top:245.8px;width:543.4px;height:48.5px;background:linear-gradient(135deg,#2563eb,#3b82f6);color:#fff"><svg class="abs" style="left:197.2px;top:14.2px;width:17.5px;height:17.5px;fill:#fff;stroke:#fff;stroke-width:.4" viewBox="0 0 16 16"><path d="M12.736 3.970a.733.733 0 0 1 1.047 0c.286.289.29.756.01 1.050L7.880 12.010a.733.733 0 0 1-1.065.02L3.217 8.384a.757.757 0 0 1 0-1.060.733.733 0 0 1 1.047 0l3.052 3.093 5.400-6.425a.247.247 0 0 1 .02-.022Z"/></svg><span class="t" id="save" style="letter-spacing:0.11px;left:230.4px;top:15.9px;font-size:17.2px;-webkit-text-stroke:.35px #fff">Save Changes</span></a>
<a class="btn gray" style="left:579.7px;top:245.8px;width:99px;height:48.5px"><span class="t" id="cancel" style="letter-spacing:0.58px;left:19.8px;top:15.2px;font-size:17.2px;">Cancel</span></a>
</section>
</main>
</body>
</html>
